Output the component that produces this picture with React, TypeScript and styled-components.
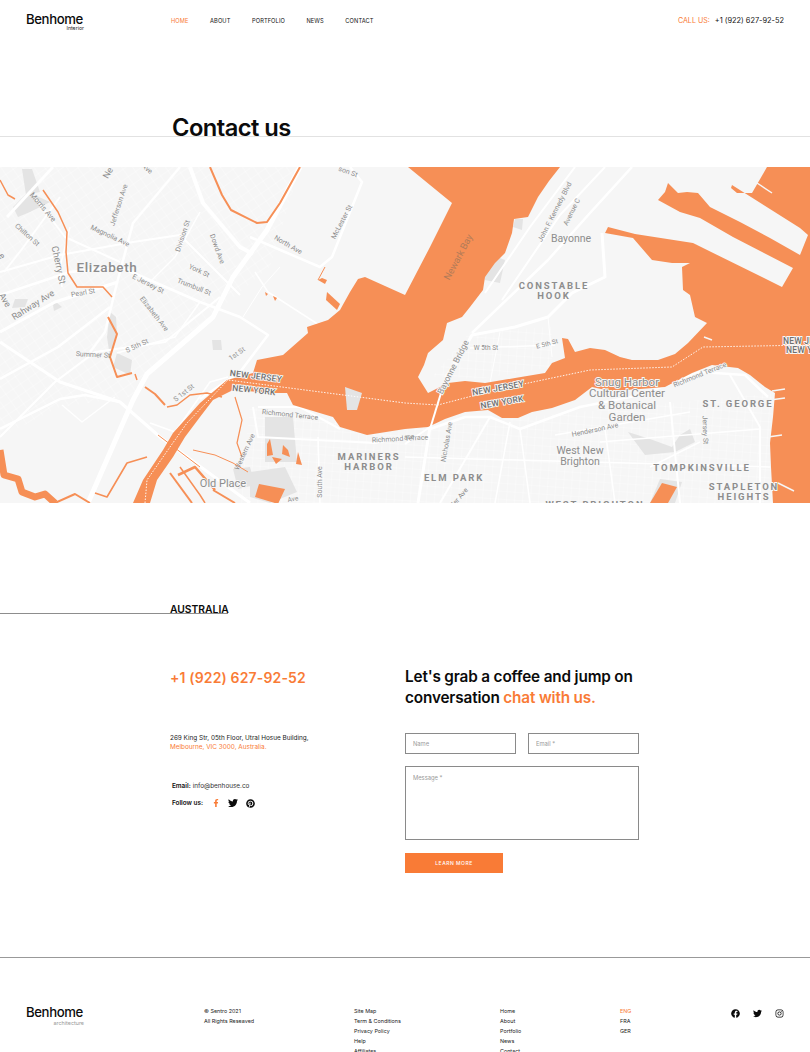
import styled, { createGlobalStyle } from "styled-components";
import { FaFacebook, FaFacebookF, FaInstagram, FaPinterest, FaTwitter } from "react-icons/fa";

const ORANGE = "#f97b36";

const GlobalStyle = createGlobalStyle`
  html, body {
    margin: 0;
    height: 1052px;
    overflow: hidden;
    background: #fff;
  }
  body {
    font-family: Inter, "Liberation Sans", sans-serif;
    color: #0b0b0b;
  }
  * {
    box-sizing: border-box;
  }
`;

const Header = styled.header`
  display: flex;
  align-items: flex-start;
  height: 94px;
  padding: 12px 26px 0;
`;

const Logo = styled.div<{ $muted?: boolean }>`
  width: 58px;
  font-size: 13.2px;
  font-weight: 500;
  line-height: 14px;
  letter-spacing: -0.4px;

  small {
    display: block;
    margin-top: ${(p) => (p.$muted ? 1 : -1)}px;
    font-size: ${(p) => (p.$muted ? 5.4 : 5.2)}px;
    font-weight: 400;
    line-height: 6px;
    letter-spacing: 0;
    text-align: right;
    color: ${(p) => (p.$muted ? "#999" : "#222")};
  }
`;

const Nav = styled.nav`
  display: flex;
  gap: 21.5px;
  margin-left: 87px;
  padding-top: 5px;
`;

const NavLink = styled.a<{ $active?: boolean }>`
  font-size: 5.7px;
  font-weight: 400;
  line-height: 8px;
  letter-spacing: 0.1px;
  color: ${(p) => (p.$active ? ORANGE : "#111")};
`;

const CallUs = styled.div`
  display: flex;
  gap: 5px;
  margin-left: auto;
  padding-top: 4px;
  font-size: 7.4px;
  line-height: 10px;
  color: #111;

  span {
    font-size: 7.1px;
    color: ${ORANGE};
  }
`;

const TitleBar = styled.div`
  height: 43px;
  padding: 13px 0 0 172px;
  border-bottom: 1px solid #e2e2e2;
`;

const Title = styled.h1`
  margin: 0;
  font-size: 23.7px;
  font-weight: 600;
  line-height: 42px;
  letter-spacing: -0.55px;
`;

const MapFrame = styled.svg`
  display: block;
  width: 810px;
  height: 336px;
  margin-top: 30px;
  background: #f6f6f6;
  font-family: Roboto, "Liberation Sans", sans-serif;
`;

const CountryBar = styled.div`
  width: 228px;
  height: 39px;
  margin-top: 72px;
  padding: 28px 0 0 170px;
  border-bottom: 1px solid #8d8d8d;
`;

const Country = styled.h2`
  margin: 0;
  font-size: 10.3px;
  font-weight: 600;
  line-height: 13px;
  white-space: nowrap;
`;

const ContactGrid = styled.section`
  display: grid;
  grid-template-columns: 235px 234px;
  height: 344px;
  padding: 52px 0 0 170px;
  border-bottom: 1px solid #999;
`;

const InfoColumn = styled.div`
  display: flex;
  flex-direction: column;
  align-items: flex-start;
`;

const Phone = styled.div`
  margin-top: 2px;
  font-size: 14px;
  font-weight: 600;
  line-height: 20px;
  letter-spacing: 0.15px;
  color: ${ORANGE};
`;

const Address = styled.p`
  margin: 46px 0 0;
  font-size: 6.4px;
  font-weight: 400;
  line-height: 9px;
  color: #222;

  span {
    display: block;
    color: ${ORANGE};
  }
`;

const DetailRow = styled.div`
  display: flex;
  align-items: center;
  gap: 2px;
  margin: 29px 0 0 2px;
  height: 10px;
  font-size: 6.4px;
  color: #333;

  b {
    font-weight: 600;
    color: #111;
  }
`;

const FollowRow = styled(DetailRow)`
  gap: 0;
  margin-top: 7px;
`;

const SocialIcons = styled.div`
  display: flex;
  align-items: center;
  gap: 8px;
  margin-left: 9px;
`;

const SocialIcon = styled.span<{ $size: number; $orange?: boolean }>`
  display: flex;
  font-size: ${(p) => p.$size}px;
  color: ${(p) => (p.$orange ? ORANGE : "#0b0b0b")};
`;

const FormColumn = styled.form`
  display: grid;
  grid-template-columns: 111px 111px;
  column-gap: 12px;
  row-gap: 12px;
  align-content: start;
`;

const FormHeading = styled.h3`
  grid-column: 1 / -1;
  width: 240px;
  margin: 0 0 13px;
  font-size: 15.3px;
  font-weight: 600;
  line-height: 21px;
  letter-spacing: -0.15px;

  span {
    color: ${ORANGE};
  }
`;

const fieldStyles = `
  border: 1px solid #8a8a8a;
  border-radius: 0;
  background: #fff;
  outline: none;
  font-family: Inter, "Liberation Sans", sans-serif;
  font-size: 5.8px;
  &::placeholder {
    color: #9a9a9a;
    opacity: 1;
  }
`;

const Field = styled.input`
  ${fieldStyles}
  height: 21px;
  width: 100%;
  padding: 0 7px;
`;

const MessageField = styled.textarea`
  ${fieldStyles}
  grid-column: 1 / -1;
  height: 74px;
  padding: 7px;
  resize: none;
`;

const SubmitButton = styled.button`
  width: 98px;
  height: 20px;
  margin-top: 1px;
  border: 0;
  background: ${ORANGE};
  color: #fff;
  font-family: Inter, "Liberation Sans", sans-serif;
  font-size: 5px;
  font-weight: 500;
  letter-spacing: 0.5px;
`;

const Footer = styled.footer`
  display: grid;
  grid-template-columns: 178px 150px 146px 112px 60px 1fr;
  padding: 48px 26px 0;
`;

const FooterColumn = styled.div<{ $paddingLeft?: number }>`
  padding-left: ${(p) => p.$paddingLeft ?? 0}px;
  font-size: 5.4px;
  line-height: 10.1px;
  color: #222;
`;

const FooterItem = styled.div<{ $active?: boolean }>`
  white-space: nowrap;
  color: ${(p) => (p.$active ? ORANGE : "inherit")};
`;

const FooterLogo = styled.div`
  margin-top: -1px;
`;

const FooterIcons = styled.div`
  display: flex;
  justify-content: flex-end;
  gap: 13px;
  padding-top: 3px;
  font-size: 9px;
`;

const river = "#f68f56";
const land = "#f6f6f6";
const patch = "#e4e4e4";

// everything below is in map coordinates: page x, page y minus 167
const waterPath =
  "M408 0L560 0L549 14L538 30L528 50L514 52L512 66L505 86L495 96L485 110L483 123L470 140L462 150L447 156L443 173L428 186L424 198L418 210L428 226L448 216L465 214L485 216L515 211L545 206L552 196L565 191L562 171L568 172L575 185L590 181L605 183L620 190L632 193L658 193L675 187L688 176L707 156L695 150L690 128L683 123L682 100L690 96L672 96L652 93L633 71L605 66L608 60L635 67L693 76L782 120L793 101L733 70L700 51L680 45L658 33L665 25L668 16L678 26L687 25L698 26L710 40L740 55L770 71L800 88L808 68L800 61L732 18L731 21L737 26L752 26L767 0L810 0L810 336L773 336L771 300L770 276L773 250L775 226L765 220L750 208L738 201L712 198L692 206L665 220L640 222L610 224L592 220L575 233L552 241L532 245L518 251L502 251L488 243L465 245L445 252L428 260L405 262L367 268L340 260L333 250L293 238L287 226L273 226L233 223L213 233L200 250L185 270L173 290L157 313L150 336L133 336L143 313L163 283L173 266L200 236L227 213L253 206L257 193L283 188L308 166L307 160L328 153L340 143L350 125L358 112L365 110L405 128L430 80L452 36Z";

const grayPatches = [
  "482 103 492 88 505 93 500 116 485 113",
  "513 60 515 52 523 52 522 63",
  "265 250 293 250 297 295 265 295",
  "117 186 132 193 130 208 113 200",
  "212 173 221 173 222 183 213 183",
  "110 145 116 150 117 167 110 190 107 170",
  "628 265 650 272 672 280 680 268 690 262 695 275 675 285 645 288",
  "650 336 660 312 682 315 675 336",
  "13 40 28 25 50 35 30 45 18 50",
  "22 2 32 2 40 25 26 28",
  "53 138 56 135 62 140 54 144",
  "15 132 28 132 25 140 12 141",
  "250 305 285 300 297 325 270 336 250 330",
  "233 302 250 300 255 318 238 322",
  "463 4 510 0 500 14 485 12",
];

const waterBlots = [
  "267 277 270 272 273 288 267 289",
  "283 278 288 283 290 290 282 287",
  "272 290 282 292 276 297",
  "259 317 285 322 278 337 255 330",
  "298 285 302 298 296 297",
  "662 316 677 320 668 336 650 336",
  "327 125 340 137 337 143 326 133",
  "318 113 322 111 327 113 325 117",
  "265 125 268 127 266 129",
  "273 129 277 131 275 134",
];

const rivers: { d: string; w: number }[] = [
  { d: "M210 0L222 28L231 43L257 56L267 55L280 36L300 0", w: 2 },
  { d: "M0 13L8 28L15 32", w: 1.5 },
  { d: "M43 23L58 45L67 65L66 85L68 106L77 120L103 120L112 130", w: 1.5 },
  { d: "M108 150L117 167L110 190L117 210L132 206", w: 2 },
  { d: "M135 207L137 213", w: 1.5 },
  { d: "M145 220L155 227L165 238", w: 2 },
  { d: "M167 240L177 238L190 228L207 226L222 230", w: 1.5 },
  { d: "M235 230L242 253L237 276L242 290", w: 1.2 },
  { d: "M193 283L215 288L233 296L248 305", w: 1 },
  { d: "M0 283L4 308L18 312L22 325L35 330L45 327L55 336", w: 7 },
  { d: "M45 327L55 336L75 327L90 336", w: 2 },
  { d: "M95 326L107 330L127 296L147 290", w: 1.6 },
  { d: "M170 306L192 336", w: 2 },
  { d: "M180 300L200 328L205 336", w: 1.5 },
  { d: "M178 308L195 300L215 323", w: 2.5 },
  { d: "M213 323L235 336", w: 2 },
  { d: "M158 268L200 300", w: 1 },
  { d: "M318 113L325 100", w: 1 },
];

const roads: { d: string; w: number }[] = [
  { d: "M88 336L133 233L147 207L213 150L233 110L267 63L300 0", w: 5 },
  { d: "M190 0L203 36L240 80L253 87", w: 4 },
  { d: "M7 50L53 0", w: 3 },
  { d: "M180 0L133 56L117 116L105 165L90 185", w: 2.5 },
  { d: "M0 105L60 88L133 75L180 68L240 128", w: 2 },
  { d: "M0 128L70 105L120 100L200 135L240 150L268 168L240 205L200 232", w: 2.5 },
  { d: "M0 165L55 135L118 115", w: 3 },
  { d: "M0 212L58 180L110 140", w: 2.5 },
  { d: "M0 175L60 215L120 235L160 270L250 336", w: 3 },
  { d: "M0 270L55 215L95 185L165 175L220 130", w: 2 },
  { d: "M0 262L60 232L85 228L120 235", w: 2.5 },
  { d: "M62 238L82 255L115 230", w: 1.5 },
  { d: "M150 256L175 265L210 215L228 210", w: 1.5 },
  { d: "M350 0L362 15L332 90L320 100L285 85L250 70", w: 2.5 },
  { d: "M255 105L268 125L330 165", w: 1.5 },
  { d: "M243 150L262 120L280 100", w: 1 },
  { d: "M60 30L22 82L4 105", w: 2 },
  { d: "M33 28L65 70L120 95", w: 2 },
  { d: "M70 60L60 100L62 120", w: 1.5 },
  { d: "M200 45L175 90L150 115", w: 1.5 },
  { d: "M117 186L175 170L200 135", w: 1.5 },
  { d: "M632 0L590 46L548 93L472 166", w: 2.5 },
  { d: "M605 0L560 48L502 133", w: 2 },
  { d: "M575 0L530 60L485 126", w: 2 },
  { d: "M602 66L605 110L572 126L548 150L515 160L472 168L440 226L430 260L418 336", w: 3 },
  { d: "M472 168L445 210", w: 1.5 },
  { d: "M470 181L555 178", w: 1.5 },
  { d: "M500 165L490 216", w: 1 },
  { d: "M548 150L552 190", w: 1 },
  { d: "M430 262L465 250L490 250L520 262L580 240L640 228L700 205L745 208L768 230", w: 2.5 },
  { d: "M405 277L430 260", w: 2 },
  { d: "M253 240L258 270L375 276L405 270", w: 2 },
  { d: "M258 240L300 240L340 262", w: 2 },
  { d: "M318 270L320 336", w: 1.5 },
  { d: "M440 336L490 250", w: 2 },
  { d: "M495 336L510 255", w: 1.5 },
  { d: "M405 290L770 300", w: 1.5 },
  { d: "M520 262L530 336", w: 1.5 },
  { d: "M605 262L615 336", w: 1.5 },
  { d: "M555 268L690 245", w: 1.5 },
  { d: "M670 235L680 336", w: 2 },
  { d: "M730 208L760 260L760 336", w: 2 },
  { d: "M600 275L760 262", w: 1.5 },
  { d: "M650 300L700 275", w: 1.5 },
];

const jetties = [
  "M772 224L785 222",
  "M770 233L785 231",
  "M768 270L782 268",
  "M778 316L794 324",
  "M704 170L712 173",
  "M757 16L772 26",
];

type Label = {
  text: string;
  x: number;
  y: number;
  size?: number;
  rot?: number;
  weight?: number;
  spacing?: number;
  color?: string;
  halo?: boolean;
  bold?: boolean;
};

const labels: Label[] = [
  { text: "Elizabeth", x: 107, y: 100, size: 13.5, weight: 500, spacing: 0.6 },
  { text: "Cherry St", x: 59, y: 98, size: 9.5, rot: 78 },
  { text: "Rahway Ave", x: 33, y: 138, size: 9, rot: -32 },
  { text: "Morris Ave", x: 43, y: 40, size: 7.5, rot: 50 },
  { text: "Chilton St", x: 27, y: 68, size: 7, rot: 42 },
  { text: "Magnolia Ave", x: 110, y: 69, size: 7, rot: 25 },
  { text: "Jefferson Ave", x: 119, y: 38, size: 7, rot: -72 },
  { text: "Division St", x: 183, y: 69, size: 7, rot: -72 },
  { text: "Dowd Ave", x: 217, y: 82, size: 7, rot: 70 },
  { text: "North Ave", x: 288, y: 78, size: 7, rot: 30 },
  { text: "McLester St", x: 342, y: 55, size: 7, rot: -62 },
  { text: "York St", x: 199, y: 104, size: 7, rot: 25 },
  { text: "Trumbull St", x: 194, y: 120, size: 7, rot: 22 },
  { text: "E Jersey St", x: 148, y: 117, size: 7, rot: 27 },
  { text: "Elizabeth Ave", x: 154, y: 147, size: 7, rot: 52 },
  { text: "Pearl St", x: 83, y: 126, size: 7, rot: -10 },
  { text: "S 5th St", x: 137, y: 179, size: 7, rot: -25 },
  { text: "Summer St", x: 93, y: 188, size: 7, rot: 3 },
  { text: "1st St", x: 237, y: 187, size: 7, rot: -35 },
  { text: "S 1st St", x: 184, y: 226, size: 7, rot: -38 },
  { text: "Ne", x: 108, y: 6, size: 9, rot: -60 },
  { text: "Ave", x: 147, y: 2, size: 7, rot: 40 },
  { text: "son St", x: 348, y: 5, size: 7, rot: 20 },
  { text: "Ave", x: 5, y: 133, size: 9, rot: 60 },
  { text: "e", x: 2, y: 89, size: 9, rot: 60 },
  { text: "NEW JERSEY", x: 256, y: 209, size: 8.5, rot: 7, weight: 500, spacing: 0.2, color: "#6f6f6f", halo: true },
  { text: "NEW YORK", x: 254, y: 223, size: 8.5, rot: 6, weight: 500, spacing: 0.2, color: "#6f6f6f", halo: true },
  { text: "Richmond Terrace", x: 290, y: 248, size: 7, rot: 6 },
  { text: "Richmond Terrace", x: 400, y: 272, size: 7, rot: -3 },
  { text: "MARINERS", x: 369, y: 289, size: 9.5, weight: 700, spacing: 1.9 },
  { text: "HARBOR", x: 369, y: 299, size: 9.5, weight: 700, spacing: 1.9 },
  { text: "Old Place", x: 223, y: 316, size: 11, halo: true },
  { text: "Western Ave", x: 245, y: 285, size: 7, rot: -65 },
  { text: "South Ave", x: 320, y: 315, size: 7, rot: -90 },
  { text: "Ave", x: 293, y: 332, size: 6.5, rot: -10 },
  { text: "Newark Bay", x: 458, y: 90, size: 9.5, rot: -62, color: "#b27b58" },
  { text: "John F. Kennedy Blvd", x: 555, y: 45, size: 7, rot: -63 },
  { text: "Avenue C", x: 572, y: 45, size: 7, rot: -63 },
  { text: "Bayonne", x: 571, y: 71, size: 10.5 },
  { text: "CONSTABLE", x: 554, y: 118, size: 9.5, weight: 700, spacing: 1.9 },
  { text: "HOOK", x: 554, y: 128, size: 9.5, weight: 700, spacing: 1.9 },
  { text: "Bayonne Bridge", x: 453, y: 200, size: 8.5, rot: -63, halo: true },
  { text: "W 5th St", x: 486, y: 181, size: 6.5 },
  { text: "E 5th St", x: 547, y: 177, size: 6.5, rot: -15 },
  { text: "NEW JERSEY", x: 498, y: 221, size: 8.5, rot: -10, weight: 500, spacing: 0.2, color: "#6f6f6f", halo: true },
  { text: "NEW YORK", x: 502, y: 235, size: 8.5, rot: -10, weight: 500, spacing: 0.2, color: "#6f6f6f", halo: true },
  { text: "Snug Harbor", x: 627, y: 215, size: 11.5, halo: true },
  { text: "Cultural Center", x: 627, y: 226, size: 11.5, halo: true },
  { text: "& Botanical", x: 627, y: 238, size: 11.5, halo: true },
  { text: "Garden", x: 627, y: 250, size: 11.5, halo: true },
  { text: "Richmond Terrace", x: 700, y: 208, size: 7, rot: -22, halo: true },
  { text: "ST. GEORGE", x: 738, y: 236, size: 9.5, weight: 700, spacing: 1.9 },
  { text: "Jersey St", x: 705, y: 263, size: 7, rot: 88 },
  { text: "Henderson Ave", x: 595, y: 263, size: 7, rot: -12 },
  { text: "West New", x: 580, y: 283, size: 10.5 },
  { text: "Brighton", x: 580, y: 294, size: 10.5 },
  { text: "Nicholas Ave", x: 447, y: 275, size: 7, rot: -80 },
  { text: "ELM PARK", x: 454, y: 310, size: 9.5, weight: 700, spacing: 1.9 },
  { text: "TOMPKINSVILLE", x: 702, y: 300, size: 9.5, weight: 700, spacing: 1.9 },
  { text: "STAPLETON", x: 744, y: 319, size: 9.5, weight: 700, spacing: 1.9, halo: true },
  { text: "HEIGHTS", x: 744, y: 329, size: 9.5, weight: 700, spacing: 1.9 },
  { text: "WEST BRIGHTON", x: 595, y: 337, size: 9.5, weight: 700, spacing: 1.9 },
  { text: "ler Ave", x: 460, y: 330, size: 7, rot: -50 },
  { text: "ace", x: 409, y: 270, size: 6.5, rot: -8 },
  { text: "NEW JERSEY", x: 783, y: 174, size: 8.5, weight: 500, spacing: 0.2, color: "#6f6f6f", halo: true, bold: true },
  { text: "NEW YORK", x: 786, y: 183, size: 8.5, weight: 500, spacing: 0.2, color: "#6f6f6f", halo: true, bold: true },
];

function MapLabel({ label }: { label: Label }) {
  const { text, x, y, size = 7, rot = 0, weight = 400, spacing = 0, color = "#8d8d8d", halo, bold } = label;
  return (
    <text
      x={x}
      y={y}
      fontSize={size}
      fontWeight={weight}
      letterSpacing={spacing}
      fill={color}
      textAnchor={bold ? "start" : "middle"}
      dominantBaseline="central"
      transform={rot ? `rotate(${rot} ${x} ${y})` : undefined}
      stroke={halo ? "#f7f7f7" : undefined}
      strokeWidth={halo ? 1.8 : undefined}
      paintOrder="stroke"
    >
      {text}
    </text>
  );
}

function StreetMap() {
  return (
    <MapFrame viewBox="0 0 810 336">
      <defs>
        <pattern id="blockA" width="9" height="9" patternUnits="userSpaceOnUse" patternTransform="rotate(-35)">
          <path d="M0 0H9M0 0V9" stroke="#fbfbfb" strokeWidth="1" />
        </pattern>
        <pattern id="blockB" width="8" height="8" patternUnits="userSpaceOnUse" patternTransform="rotate(4)">
          <path d="M0 0H8M0 0V8" stroke="#fcfcfc" strokeWidth="1" />
        </pattern>
      </defs>
      <rect width="810" height="336" fill={land} />
      <polygon points="0 0 300 0 270 100 210 150 130 230 60 240 0 270" fill="url(#blockA)" />
      <polygon points="405 262 775 226 775 336 405 336 240 336 250 240" fill="url(#blockB)" />
      <polygon points="432 210 470 165 552 160 552 200 480 212" fill="url(#blockB)" />
      {grayPatches.map((points) => (
        <polygon key={points} points={points} fill={patch} />
      ))}
      {roads.map((road) => (
        <path key={road.d} d={road.d} fill="none" stroke="#fff" strokeWidth={road.w} strokeLinejoin="round" />
      ))}
      <path d={waterPath} fill={river} />
      {rivers.map((line) => (
        <path key={line.d} d={line.d} fill="none" stroke={river} strokeWidth={line.w} strokeLinejoin="round" />
      ))}
      {waterBlots.map((points) => (
        <polygon key={points} points={points} fill={river} />
      ))}
      <polygon points="345 220 362 226 357 243 347 243" fill={patch} />
      <path d="M430 262L441 226" fill="none" stroke="#fff" strokeWidth="2" />
      {jetties.map((d) => (
        <path key={d} d={d} fill="none" stroke={land} strokeWidth="1.5" />
      ))}
      <path
        d="M145 336L147 313L170 280L187 256L228 213L405 236L438 238L495 223L590 203L672 200L703 180L810 178"
        fill="none"
        stroke="#fff"
        strokeWidth="0.9"
        strokeDasharray="1.5 1.5"
      />
      {labels.map((label) => (
        <MapLabel key={`${label.text}-${label.x}`} label={label} />
      ))}
    </MapFrame>
  );
}

const navItems = ["HOME", "ABOUT", "PORTFOLIO", "NEWS", "CONTACT"];
const linksA = ["Site Map", "Term & Conditions", "Privacy Policy", "Help", "Affiliates"];
const linksB = ["Home", "About", "Portfolio", "News", "Contact"];
const languages = ["ENG", "FRA", "GER"];

export default function App() {
  return (
    <>
      <GlobalStyle />
      <Header>
        <Logo>
          Benhome
          <small>Interior</small>
        </Logo>
        <Nav>
          {navItems.map((item, index) => (
            <NavLink key={item} $active={index === 0}>
              {item}
            </NavLink>
          ))}
        </Nav>
        <CallUs>
          <span>CALL US:</span> +1 (922) 627-92-52
        </CallUs>
      </Header>

      <TitleBar>
        <Title>Contact us</Title>
      </TitleBar>

      <StreetMap />

      <CountryBar>
        <Country>AUSTRALIA</Country>
      </CountryBar>

      <ContactGrid>
        <InfoColumn>
          <Phone>+1 (922) 627-92-52</Phone>
          <Address>
            269 King Str, 05th Floor, Utral Hosue Building,
            <span>Melbourne, VIC 3000, Australia.</span>
          </Address>
          <DetailRow>
            <b>Email:</b> info@benhouse.co
          </DetailRow>
          <FollowRow>
            <b>Follow us:</b>
            <SocialIcons>
              <SocialIcon $size={8} $orange>
                <FaFacebookF />
              </SocialIcon>
              <SocialIcon $size={10}>
                <FaTwitter />
              </SocialIcon>
              <SocialIcon $size={9}>
                <FaPinterest />
              </SocialIcon>
            </SocialIcons>
          </FollowRow>
        </InfoColumn>

        <FormColumn>
          <FormHeading>
            Let's grab a coffee and jump on conversation <span>chat with us.</span>
          </FormHeading>
          <Field placeholder="Name" />
          <Field placeholder="Email *" />
          <MessageField placeholder="Message *" />
          <SubmitButton type="button">LEARN MORE</SubmitButton>
        </FormColumn>
      </ContactGrid>

      <Footer>
        <FooterLogo>
          <Logo $muted>
            Benhome
            <small>architecture</small>
          </Logo>
        </FooterLogo>
        <FooterColumn>
          <FooterItem>© Sentro 2021</FooterItem>
          <FooterItem>All Rights Reseaved</FooterItem>
        </FooterColumn>
        <FooterColumn>
          {linksA.map((item) => (
            <FooterItem key={item}>{item}</FooterItem>
          ))}
        </FooterColumn>
        <FooterColumn>
          {linksB.map((item) => (
            <FooterItem key={item}>{item}</FooterItem>
          ))}
        </FooterColumn>
        <FooterColumn $paddingLeft={8}>
          {languages.map((item, index) => (
            <FooterItem key={item} $active={index === 0}>
              {item}
            </FooterItem>
          ))}
        </FooterColumn>
        <FooterIcons>
          <FaFacebook />
          <FaTwitter />
          <FaInstagram />
        </FooterIcons>
      </Footer>
    </>
  );
}
